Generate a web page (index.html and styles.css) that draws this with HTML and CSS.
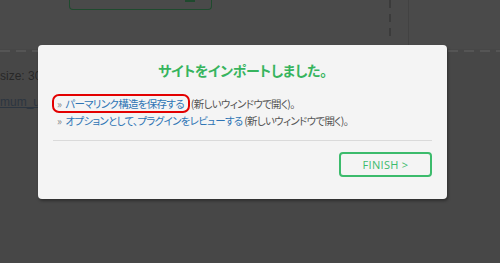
FILE: index.html
```html
<!DOCTYPE html>
<html lang="ja">
<head>
    <meta charset="UTF-8">
    <meta name="viewport" content="width=device-width, initial-scale=1.0">
    <title>インポート完了</title>
    <link rel="stylesheet" href="styles.css">
</head>
<body>
    <div class="page">
        <div class="page-top">
            <div class="ghost-btn"><span class="ghost-mark"></span></div>
            <div class="vdash"></div>
            <div class="side-edge"></div>
        </div>
        <div class="hdash"></div>
        <p class="meta">size: 300 MB</p>
        <a class="meta-link" href="#">mum_upload_size</a>
    </div>

    <div class="modal">
        <h2 class="modal-title">サイトをインポートしました。</h2>
        <ul class="next-list">
            <li>
                <span class="marked"><span class="raquo">»</span><a href="#">パーマリンク構造を保存する</a></span>(新しいウィンドウで開く)。
            </li>
            <li>
                <span class="raquo">»</span><a href="#">オプションとして、プラグインをレビューする</a> (新しいウィンドウで開く)。
            </li>
        </ul>
        <div class="modal-footer">
            <button class="finish-btn">FINISH &gt;</button>
        </div>
    </div>
</body>
</html>
```

FILE: styles.css
```css
* {
    margin: 0;
    padding: 0;
    box-sizing: border-box;
}

body {
    font-family: "Noto Sans CJK JP", "Noto Sans", sans-serif;
    background: #474747;
    width: 500px;
    height: 263px;
    overflow: hidden;
}

/* dimmed page behind the dialog */
.page {
    height: 263px;
}

.page-top {
    display: flex;
    height: 49px;
    background: #4a4a4a;
}

.ghost-btn {
    width: 143px;
    height: 10px;
    margin-left: 69px;
    border: 1.5px solid #1f4a2e;
    border-top: none;
    border-radius: 0 0 4px 4px;
    position: relative;
}

.ghost-mark {
    position: absolute;
    top: 0;
    left: 115px;
    width: 10px;
    height: 2px;
    background: #1f4a2e;
}

.vdash {
    width: 2px;
    height: 42px;
    margin-left: 177px;
    background: repeating-linear-gradient(180deg, #3b3b3b 0 8px, transparent 8px 14px);
}

.side-edge {
    width: 1px;
    margin-left: 17px;
    background: #424242;
}

.hdash {
    height: 2px;
    margin-top: 1px;
    background: repeating-linear-gradient(90deg, #555 0 10px, transparent 10px 16px);
}

.meta {
    margin-top: 17px;
    font-family: "Liberation Sans", sans-serif;
    font-size: 12px;
    color: #272727;
}

.meta-link {
    display: block;
    margin-top: 12px;
    font-family: "Liberation Sans", sans-serif;
    font-size: 12px;
    color: #2c3540;
}

/* dialog */
.modal {
    position: absolute;
    left: 38px;
    top: 45px;
    width: 409px;
    height: 154px;
    background: #f4f4f4;
    border-radius: 4px;
    box-shadow: 1px 2px 3px rgba(0, 0, 0, 0.35);
    padding: 15px 15px 0;
}

.modal-title {
    text-align: center;
    font-size: 14px;
    font-weight: 700;
    line-height: 20px;
    color: #37b45e;
    font-feature-settings: "palt";
    letter-spacing: -0.3px;
}

.next-list {
    list-style: none;
    margin-top: 15px;
    padding-left: 4px;
    font-size: 10.5px;
    letter-spacing: -0.7px;
    color: #555;
    font-feature-settings: "palt";
}

.next-list li {
    height: 17px;
    line-height: 17px;
    white-space: nowrap;
}

.next-list a {
    color: #2e74b5;
    text-decoration: none;
}

.raquo {
    color: #888;
    margin-right: 4px;
}

.marked {
    border: 2px solid #e30000;
    border-radius: 7px;
    padding: 0 4px 0 3px;
    margin-left: -5px;
    margin-right: 1px;
}

.modal-footer {
    margin-top: 11px;
    border-top: 1px solid #dadada;
    padding-top: 11px;
    display: flex;
    justify-content: flex-end;
}

.finish-btn {
    width: 93px;
    height: 25px;
    background: transparent;
    border: 2px solid #3cbb6c;
    border-radius: 4px;
    color: #3cbb6c;
    font-family: "Open Sans", sans-serif;
    font-size: 11px;
    letter-spacing: 0.3px;
}
```
